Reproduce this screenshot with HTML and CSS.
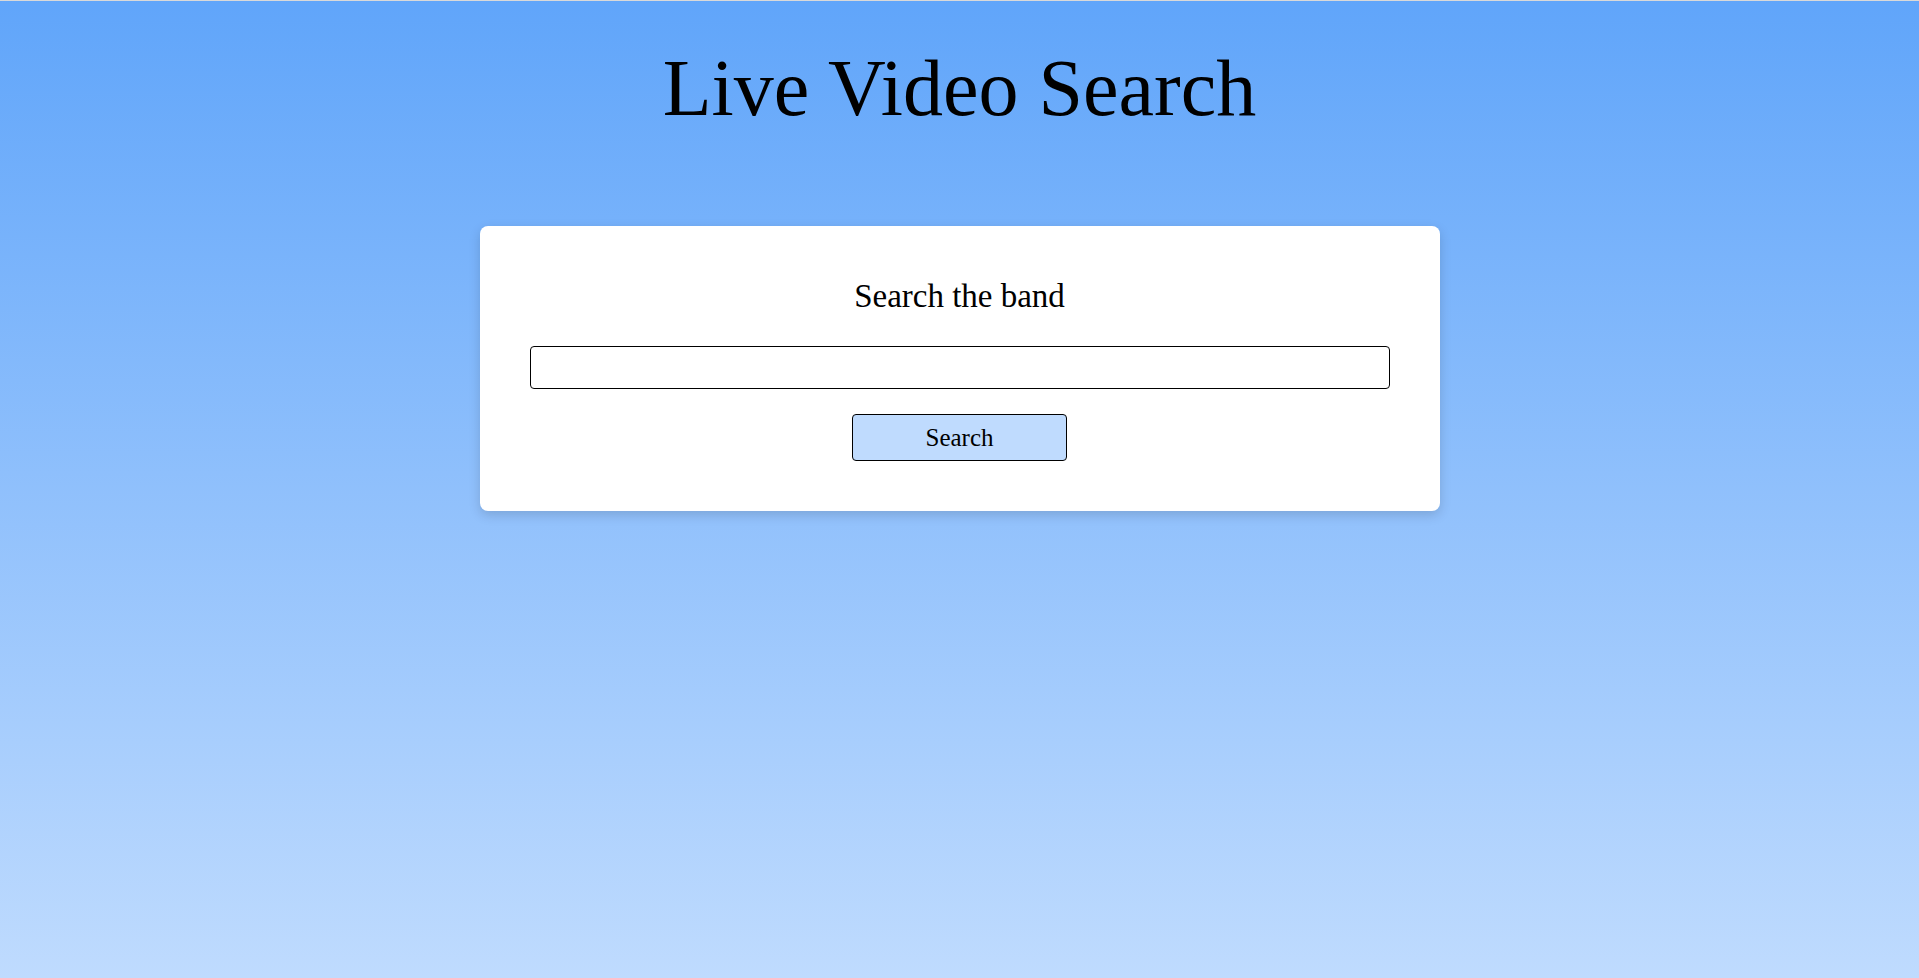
FILE: index.html
```html
<!DOCTYPE html>
<html lang="en">
<head>
<meta charset="utf-8">
<title>Live Video Search</title>
<link rel="stylesheet" href="styles.css">
</head>
<body>
<div class="page">
  <h1 class="title">Live Video Search</h1>
  <main class="card">
    <h2 class="card-title">Search the band</h2>
    <input class="search-input" type="text" aria-label="Search the band">
    <button class="search-btn" type="button">Search</button>
  </main>
</div>
</body>
</html>
```

FILE: styles.css
```css
html, body {
  margin: 0;
  padding: 0;
}
body {
  font-family: "Liberation Serif", "DejaVu Serif", serif;
  color: #000;
  border-top: 1px solid #d9d9d9;
  background: linear-gradient(to bottom, #60a5fa, #bfdbfe);
  min-height: 977px;
}
.page {
  display: flex;
  flex-direction: column;
  align-items: center;
}
.title {
  margin: 37px 0 0;
  font-size: 80px;
  font-weight: 400;
  line-height: 100px;
}
.card {
  margin-top: 88px;
  width: 960px;
  box-sizing: border-box;
  padding: 50px;
  background: #fff;
  border-radius: 8px;
  box-shadow: 0 4px 12px rgba(0, 0, 0, 0.15);
  display: flex;
  flex-direction: column;
  align-items: center;
}
.card-title {
  margin: 0;
  font-size: 33px;
  font-weight: 400;
  line-height: 40px;
}
.search-input {
  margin-top: 30px;
  width: 100%;
  height: 43px;
  box-sizing: border-box;
  border: 1px solid #000;
  border-radius: 4px;
  font: inherit;
  font-size: 20px;
  padding: 0 10px;
}
.search-btn {
  margin-top: 25px;
  width: 215px;
  height: 47px;
  box-sizing: border-box;
  background: #bfdbfe;
  border: 1px solid #000;
  border-radius: 4px;
  font-family: inherit;
  font-size: 25px;
  color: #000;
}
```
